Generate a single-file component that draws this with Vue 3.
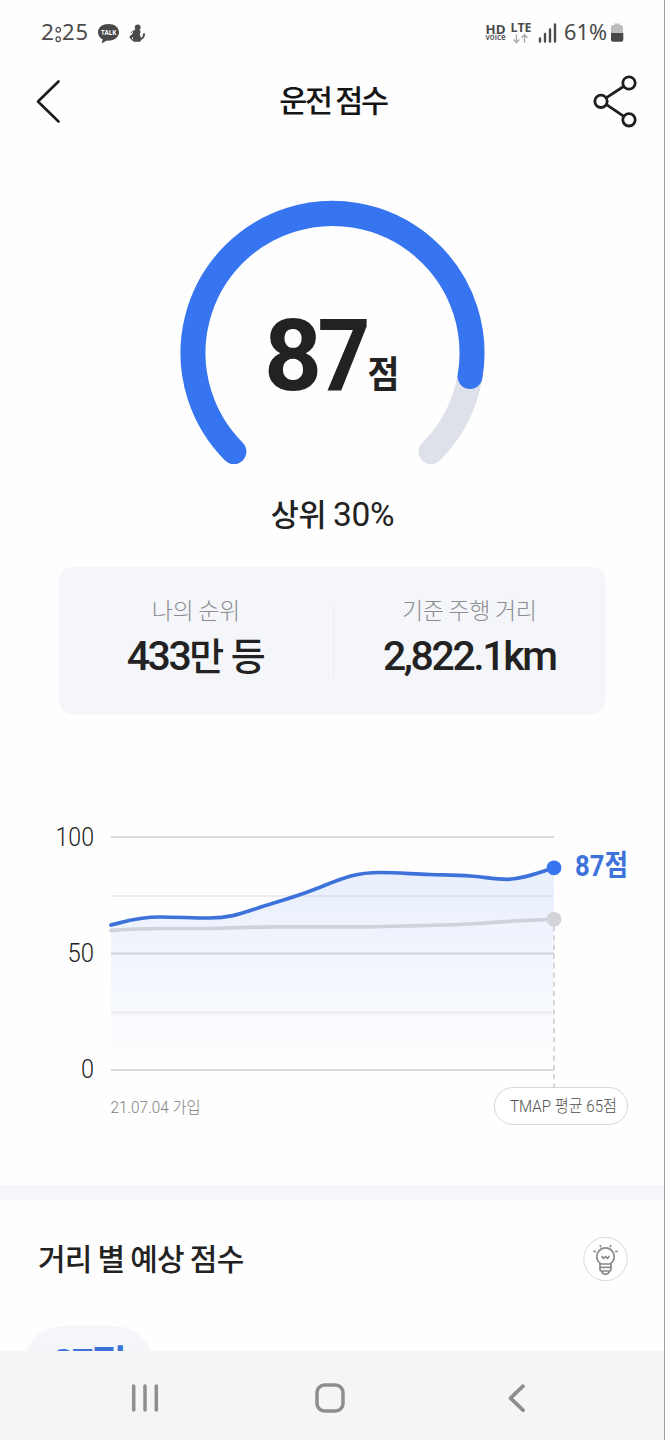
<script setup>
const gridLines = [
  { y: 27, major: true },
  { y: 86, major: false },
  { y: 143.5, major: true },
  { y: 202.5, major: false },
  { y: 260, major: true },
]
const axisLabels = [
  { y: 35.7, text: '100', w: 38.5 },
  { y: 152.2, text: '50', w: 26.5 },
  { y: 268.2, text: '0', w: 13 },
]
const scoreLine =
  'M111 115C124 112 136 107 160 107C180 107 190 108 210 108C234 108 244 102 273 93.3C287 89 300 85 313 80C340 69.5 352 62.5 380 62.500C397 62.500 413 64 430 64.500C443 65 457 65 470 66C484 67 495 69.300 507 69.300C522 69.300 538 63 554 57.800'
const averageLine =
  'M111 120.300C128 119 145 118.500 160 118.500L210 118.500C235 118 255 116.800 280 116.800L370 116.800C390 116.500 410 115.700 430 115.300C445 115 457 114.800 470 114C497 112 525 110 554 109.300'
</script>

<template>
  <div class="screen">
    <header class="status">
      <svg class="status-left" width="120" height="34" viewBox="0 -4 120 34">
        <g class="status-text">
          <text x="0" y="21" font-size="22" textLength="13" lengthAdjust="spacingAndGlyphs">2</text>
          <text x="21" y="21" font-size="22" textLength="26" lengthAdjust="spacing">25</text>
        </g>
        <g fill="none" stroke="#4b4b4b" stroke-width="1.200">
          <ellipse cx="17.200" cy="10.800" rx="2.200" ry="2.400" />
          <ellipse cx="17.200" cy="20.300" rx="2.200" ry="2.400" />
        </g>
        <path fill="#484848" d="M67.500 5c6 0 10.500 3.500 10.500 8.300s-4.500 8.400-10.500 8.400l-1.700-.1-4.300 2.500c-.6.300-.9 0-.7-.6l1-3C58.900 19.300 57 16.500 57 13.300c0-4.800 4.500-8.300 10.500-8.300z" />
        <text class="talk" x="60" y="16" textLength="15.500" lengthAdjust="spacingAndGlyphs">TALK</text>
        <circle cx="96.700" cy="8.300" r="2.900" fill="#4b4b4b" />
        <path fill="#4b4b4b" d="M89.700 13.200l4.800-3 4 .6c1.700 1.200 1.100 2.900.3 4.200l1 3.700c1.900-.4 2.300-2.200 2-4l2-.7c.6 3-.9 5.500-2.800 6.300l-2 2.400h-5.800l-2.700-1.800-2.300-2.800 3.400-3.600.8-2.500-2 2z" />
        <path d="M92 20.700v-2.600l-1.300 1.200z" fill="#fff" />
      </svg>
      <svg class="status-right" width="142" height="34" viewBox="0 -4 142 34">
        <g class="network">
          <text x="0.500" y="15.500" font-size="13" textLength="20" lengthAdjust="spacingAndGlyphs">HD</text>
          <text class="voice" x="0.500" y="22" font-size="8" textLength="20" lengthAdjust="spacingAndGlyphs">voice</text>
          <text x="25.500" y="14" font-size="13" textLength="21" lengthAdjust="spacingAndGlyphs">LTE</text>
        </g>
        <path d="M31.500 16.500v8M28.500 21.500l3 3 3-3M39.500 24.800v-8M36.500 19.800l3-3 3 3" fill="none" stroke="#aaa" stroke-width="1.400" />
        <path d="M55 20.500v3M60 16v7.500M65 11.500v12M70 6.500v17" stroke="#4b4b4b" stroke-width="2.400" stroke-linecap="round" />
        <text class="status-text" x="79" y="22" font-size="22" textLength="43" lengthAdjust="spacingAndGlyphs">61%</text>
        <path d="M126 16V9q0-2 2-2h1.500V5.500h5V7h1.500q2 0 2 2v7z" fill="#bdbdbd" />
        <path d="M126 15h12.300v6.500q0 2.300-2 2.300h-8.300q-2 0-2-2.300z" fill="#484848" />
      </svg>
    </header>

    <nav class="titlebar">
      <svg width="30" height="50" viewBox="0 0 30 50">
        <path d="M23.500 5.500L3 25.500l20.500 20" fill="none" stroke="#1c1c1c" stroke-width="2.600" stroke-linecap="round" stroke-linejoin="round" />
      </svg>
      <h1>운전 점수</h1>
      <svg width="46" height="54" viewBox="0 0 46 54">
        <g fill="none" stroke="#1f1f1f" stroke-width="2.800">
          <path d="M14.500 23.700L31.500 12.500M14.500 30.700L31.500 42.200" />
          <circle cx="37" cy="9" r="6.200" />
          <circle cx="9" cy="27.300" r="6.200" />
          <circle cx="37" cy="45.800" r="6.200" />
        </g>
      </svg>
    </nav>

    <section class="gauge">
      <svg width="320" height="290" viewBox="0.5 0 320 290">
        <g fill="none" stroke-width="25" stroke-linecap="round">
          <path d="M297.500 186.500A139.500 139.500 0 0 1 258.600 261.600" stroke="#dee0ea" />
          <path d="M61.400 261.600A139.500 139.500 0 1 1 297.500 186.500" stroke="#3674f0" />
        </g>
        <g class="score">
          <text x="91.500" y="200" textLength="58" lengthAdjust="spacingAndGlyphs">8</text>
          <text x="145" y="200" textLength="53" lengthAdjust="spacingAndGlyphs">7</text>
        </g>
        <text class="unit" x="195" y="198" textLength="32" lengthAdjust="spacingAndGlyphs">점</text>
      </svg>
      <p class="rank">상위 <span class="num">30%</span></p>
    </section>

    <section class="stats">
      <div class="stat">
        <span class="stat-label">나의 순위</span>
        <strong class="stat-value"><span class="num">433</span>만 등</strong>
      </div>
      <div class="stat">
        <span class="stat-label">기준 주행 거리</span>
        <strong class="stat-value"><span class="num">2,822.1km</span></strong>
      </div>
    </section>

    <section class="chart">
      <svg width="665" height="330" viewBox="0 0 665 330">
        <defs>
          <linearGradient id="area" gradientUnits="userSpaceOnUse" x1="0" y1="60" x2="0" y2="255">
            <stop offset="0" stop-color="#3674f0" stop-opacity="0.110" />
            <stop offset="0.500" stop-color="#3674f0" stop-opacity="0.060" />
            <stop offset="1" stop-color="#3674f0" stop-opacity="0" />
          </linearGradient>
        </defs>
        <line v-for="g in gridLines" :key="g.y" x1="111" x2="554" :y1="g.y" :y2="g.y" :class="g.major ? 'grid-major' : 'grid-minor'" />
        <path :d="scoreLine + 'V260H111Z'" fill="url(#area)" />
        <path d="M554 109V278" stroke="#d6d6d8" stroke-width="2" stroke-dasharray="5 4.250" stroke-dashoffset="2" />
        <path :d="averageLine" fill="none" stroke="#d0d2da" stroke-width="3.700" stroke-linecap="round" />
        <path :d="scoreLine" fill="none" stroke="#3c72da" stroke-width="3.700" stroke-linecap="round" />
        <circle cx="554" cy="109.300" r="7.400" fill="#d3d4d8" />
        <circle cx="554" cy="57.800" r="7.400" fill="#3674f0" />
        <text v-for="a in axisLabels" :key="a.text" class="axis" x="94" :y="a.y" text-anchor="end" :textLength="a.w" lengthAdjust="spacingAndGlyphs">{{ a.text }}</text>
        <text class="current" x="575" y="66" textLength="53" lengthAdjust="spacingAndGlyphs">87점</text>
        <text class="joined" x="110.500" y="303" textLength="90" lengthAdjust="spacingAndGlyphs">21.07.04 가입</text>
        <rect x="494.500" y="277.500" width="133" height="37" rx="18.500" fill="#fff" stroke="#d8d8da" />
        <text class="average" x="510" y="302" textLength="107" lengthAdjust="spacingAndGlyphs">TMAP 평균 65점</text>
      </svg>
    </section>

    <section class="forecast">
      <div class="forecast-head">
        <h2>거리 별 예상 점수</h2>
        <svg width="46" height="46" viewBox="0 0 46 46">
          <circle cx="22.500" cy="23" r="21.700" fill="#fff" stroke="#d9d9db" />
          <g fill="none" stroke="#8b8b8b" stroke-width="1.700" stroke-linecap="round" stroke-linejoin="round">
            <path d="M17.600 27.800a8.700 8.700 0 1 1 9.800 0M17 28v5.500q0 1.500 1.500 1.500h8q1.500 0 1.500-1.500V28zM17 31.300h11M18.500 35.300q1 3 4 3t4-3" />
            <path d="M19 20.500l1.500 2 2-2 2 2 1.500-2M17.300 9.600l.4.900M27.700 9.600l-.4.900M11 15.200l1.200.4M34 15.200l-1.200.4" />
          </g>
        </svg>
      </div>
      <div class="bubble"><span class="num">87</span>점</div>
    </section>

    <footer class="navbar">
      <svg width="30" height="30" viewBox="0 0 30 30"><path d="M3.700 3v24M15 3v24M26.300 3v24" stroke="#8e8e8e" stroke-width="3.500" stroke-linecap="round" /></svg>
      <svg width="32" height="32" viewBox="0 0 32 32"><rect x="3" y="3" width="26" height="26" rx="7.500" fill="none" stroke="#8e8e8e" stroke-width="3.500" /></svg>
      <svg width="30" height="30" viewBox="0 0 30 30"><path d="M22 3.200L9.500 15.200l12.500 12" fill="none" stroke="#8e8e8e" stroke-width="3.700" stroke-linecap="round" stroke-linejoin="round" /></svg>
    </footer>
  </div>
</template>

<style>
body {
  margin: 0;
  background: #fff;
}
</style>

<style scoped>
.screen {
  position: relative;
  display: flex;
  flex-direction: column;
  width: 665px;
  height: 1440px;
  overflow: hidden;
  background: #fefefe;
  color: #222;
  font-family: "Noto Sans CJK KR", sans-serif;
}
.screen::after {
  content: "";
  position: absolute;
  top: 0;
  right: 0;
  width: 1px;
  height: 100%;
  background: #a0a0a2;
}
svg {
  display: block;
  overflow: visible;
}
h1,
h2,
p {
  margin: 0;
}
.num {
  font-family: Roboto, sans-serif;
}
.status {
  display: flex;
  justify-content: space-between;
  height: 47px;
  padding: 14px 38px 0 41px;
  box-sizing: border-box;
}
.status-left {
  margin-top: 1px;
}
.status-text {
  fill: #4b4b4b;
  font-family: "Noto Sans", sans-serif;
  font-weight: 400;
}
.talk {
  fill: #fff;
  font: 700 7.5px "Open Sans", sans-serif;
}
.network {
  fill: #4b4b4b;
  font-family: "Open Sans", sans-serif;
  font-weight: 700;
}
.network .voice {
  font-weight: 600;
}
.titlebar {
  display: flex;
  align-items: center;
  justify-content: space-between;
  height: 108px;
  padding: 0 27px 0 35px;
}
h1 {
  margin: -4px 0 0 9px;
  font-size: 30.5px;
  line-height: 40px;
  font-weight: 500;
  letter-spacing: -2.3px;
  color: #151515;
}
.gauge {
  display: flex;
  flex-direction: column;
  align-items: center;
  height: 412px;
  padding-top: 35px;
  box-sizing: border-box;
}
.gauge svg {
  flex: none;
}
.score {
  font-family: Roboto, sans-serif;
  font-size: 101px;
  font-weight: 700;
  fill: #222;
}
.unit {
  font-size: 37px;
  font-weight: 700;
  fill: #222;
}
.rank {
  margin-top: 11px;
  font-size: 30.5px;
  line-height: 44px;
  font-weight: 500;
  letter-spacing: -0.3px;
}
.rank .num {
  font-size: 33.5px;
  font-weight: 400;
}
.stats {
  display: grid;
  grid-template-columns: 1fr 1fr;
  height: 147px;
  margin: 0 59px;
  border-radius: 14px;
  background: #f4f6fa;
}
.stat {
  display: flex;
  flex-direction: column;
  align-items: center;
  padding-top: 25px;
}
.stat + .stat {
  background: linear-gradient(#ebedf0, #ebedf0) 0 37px / 1px 74px no-repeat;
}
.stat-label {
  font-size: 23px;
  line-height: 34px;
  font-weight: 300;
  letter-spacing: -0.3px;
  color: #8c8d90;
}
.stat-value {
  margin-top: 1px;
  font-size: 38px;
  line-height: 54px;
  font-weight: 500;
  letter-spacing: -1px;
}
.stat-value .num {
  font-size: 41px;
  letter-spacing: -2.4px;
}
.chart {
  margin-top: 96px;
}
.grid-major {
  stroke: #dadadc;
  stroke-width: 2;
}
.grid-minor {
  stroke: #eeeef0;
  stroke-width: 1.8;
}
.axis {
  font-family: Roboto, sans-serif;
  font-size: 25px;
  font-weight: 300;
  fill: #222;
}
.current {
  font-family: Roboto, "Noto Sans CJK KR", sans-serif;
  font-size: 29px;
  font-weight: 700;
  fill: #3c72da;
}
.joined {
  font-family: Roboto, "Noto Sans CJK KR", sans-serif;
  font-size: 16px;
  font-weight: 300;
  fill: #808080;
}
.average {
  font-family: Roboto, "Noto Sans CJK KR", sans-serif;
  font-size: 17px;
  font-weight: 300;
  fill: #505050;
}
.forecast {
  height: 166px;
  margin-top: 45px;
  padding: 0 0 0 25px;
  border-top: 15px solid #f4f6fa;
  box-sizing: border-box;
  overflow: hidden;
}
.forecast-head {
  display: flex;
  align-items: center;
  justify-content: space-between;
  height: 118px;
  padding: 0 36px 0 13px;
}
h2 {
  margin-top: -4px;
  font-size: 30px;
  line-height: 44px;
  font-weight: 500;
  letter-spacing: -0.8px;
}
.bubble {
  width: 129px;
  height: 88px;
  margin: 8px 0 0 -1px;
  border-radius: 38px;
  background: #f4f6fa;
  text-align: center;
  font-size: 38px;
  line-height: 70px;
  font-weight: 700;
  letter-spacing: -2px;
  color: #3c72da;
}
.navbar {
  display: flex;
  align-items: center;
  justify-content: space-between;
  flex: 1;
  padding: 5px 134px 0 129.5px;
  background: #f5f5f5;
}
</style>
